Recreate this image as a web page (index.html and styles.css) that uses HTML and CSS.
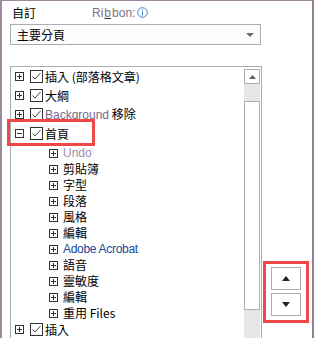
FILE: index.html
```html
<!DOCTYPE html>
<html>
<head>
<meta charset="utf-8">
<link rel="stylesheet" href="styles.css">
</head>
<body>
<div class="frame">
  <div class="head">
    <span class="label">自訂</span>
    <span class="ribbon">Ri<u>b</u>bon:<svg class="info" width="11" height="11" viewBox="0 0 11 11"><circle cx="5.5" cy="5.5" r="4.8" fill="none" stroke="#3c7fd4" stroke-width="1"/><rect x="5" y="2.5" width="1" height="1" fill="#3c7fd4"/><rect x="5" y="4.5" width="1" height="4" fill="#3c7fd4"/></svg></span>
  </div>
  <div class="select">
    <span>主要分頁</span>
    <svg class="caret" width="8" height="5" viewBox="0 0 8 5"><path d="M0 0H8L4 4Z" fill="#6d6d6d"/></svg>
  </div>
  <div class="main">
    <div class="listbox">
      <div class="tree">
        <div class="row top">
          <svg class="exp" width="9" height="9" viewBox="0 0 9 9"><rect x="0.5" y="0.5" width="8" height="8" fill="#fff" stroke="#333"/><path d="M2 4.5H7M4.5 2V7" stroke="#333"/></svg>
          <svg class="chk" width="13" height="13" viewBox="0 0 13 13"><rect x="0.5" y="0.5" width="12" height="12" fill="#fff" stroke="#333"/><path d="M2.5 6.5L5 9L10.5 3" fill="none" stroke="#444" stroke-width="1"/></svg>
          <span class="txt">插入 (部落格文章)</span>
        </div>
        <div class="row top">
          <svg class="exp" width="9" height="9" viewBox="0 0 9 9"><rect x="0.5" y="0.5" width="8" height="8" fill="#fff" stroke="#333"/><path d="M2 4.5H7M4.5 2V7" stroke="#333"/></svg>
          <svg class="chk" width="13" height="13" viewBox="0 0 13 13"><rect x="0.5" y="0.5" width="12" height="12" fill="#fff" stroke="#333"/><path d="M2.5 6.5L5 9L10.5 3" fill="none" stroke="#444" stroke-width="1"/></svg>
          <span class="txt">大綱</span>
        </div>
        <div class="row top">
          <svg class="exp" width="9" height="9" viewBox="0 0 9 9"><rect x="0.5" y="0.5" width="8" height="8" fill="#fff" stroke="#333"/><path d="M2 4.5H7M4.5 2V7" stroke="#333"/></svg>
          <svg class="chk" width="13" height="13" viewBox="0 0 13 13"><rect x="0.5" y="0.5" width="12" height="12" fill="#fff" stroke="#333"/><path d="M2.5 6.5L5 9L10.5 3" fill="none" stroke="#444" stroke-width="1"/></svg>
          <span class="txt"><span class="muted">Background</span> 移除</span>
        </div>
        <div class="row top selected">
          <svg class="exp" width="9" height="9" viewBox="0 0 9 9"><rect x="0.5" y="0.5" width="8" height="8" fill="#fff" stroke="#333"/><path d="M2 4.5H7" stroke="#333"/></svg>
          <svg class="chk" width="13" height="13" viewBox="0 0 13 13"><rect x="0.5" y="0.5" width="12" height="12" fill="#fff" stroke="#333"/><path d="M2.5 6.5L5 9L10.5 3" fill="none" stroke="#444" stroke-width="1"/></svg>
          <span class="txt">首頁</span>
          <span class="redbox"></span>
        </div>
        <div class="sub first">
          <svg class="exp" width="9" height="9" viewBox="0 0 9 9"><rect x="0.5" y="0.5" width="8" height="8" fill="#fff" stroke="#333"/><path d="M2 4.5H7M4.5 2V7" stroke="#333"/></svg>
          <span class="txt muted2">Undo</span>
        </div>
        <div class="sub">
          <svg class="exp" width="9" height="9" viewBox="0 0 9 9"><rect x="0.5" y="0.5" width="8" height="8" fill="#fff" stroke="#333"/><path d="M2 4.5H7M4.5 2V7" stroke="#333"/></svg>
          <span class="txt">剪貼簿</span>
        </div>
        <div class="sub">
          <svg class="exp" width="9" height="9" viewBox="0 0 9 9"><rect x="0.5" y="0.5" width="8" height="8" fill="#fff" stroke="#333"/><path d="M2 4.5H7M4.5 2V7" stroke="#333"/></svg>
          <span class="txt">字型</span>
        </div>
        <div class="sub">
          <svg class="exp" width="9" height="9" viewBox="0 0 9 9"><rect x="0.5" y="0.5" width="8" height="8" fill="#fff" stroke="#333"/><path d="M2 4.5H7M4.5 2V7" stroke="#333"/></svg>
          <span class="txt">段落</span>
        </div>
        <div class="sub">
          <svg class="exp" width="9" height="9" viewBox="0 0 9 9"><rect x="0.5" y="0.5" width="8" height="8" fill="#fff" stroke="#333"/><path d="M2 4.5H7M4.5 2V7" stroke="#333"/></svg>
          <span class="txt">風格</span>
        </div>
        <div class="sub">
          <svg class="exp" width="9" height="9" viewBox="0 0 9 9"><rect x="0.5" y="0.5" width="8" height="8" fill="#fff" stroke="#333"/><path d="M2 4.5H7M4.5 2V7" stroke="#333"/></svg>
          <span class="txt">編輯</span>
        </div>
        <div class="sub">
          <svg class="exp" width="9" height="9" viewBox="0 0 9 9"><rect x="0.5" y="0.5" width="8" height="8" fill="#fff" stroke="#333"/><path d="M2 4.5H7M4.5 2V7" stroke="#333"/></svg>
          <span class="txt adobe">Adobe Acrobat</span>
        </div>
        <div class="sub">
          <svg class="exp" width="9" height="9" viewBox="0 0 9 9"><rect x="0.5" y="0.5" width="8" height="8" fill="#fff" stroke="#333"/><path d="M2 4.5H7M4.5 2V7" stroke="#333"/></svg>
          <span class="txt">語音</span>
        </div>
        <div class="sub">
          <svg class="exp" width="9" height="9" viewBox="0 0 9 9"><rect x="0.5" y="0.5" width="8" height="8" fill="#fff" stroke="#333"/><path d="M2 4.5H7M4.5 2V7" stroke="#333"/></svg>
          <span class="txt">靈敏度</span>
        </div>
        <div class="sub">
          <svg class="exp" width="9" height="9" viewBox="0 0 9 9"><rect x="0.5" y="0.5" width="8" height="8" fill="#fff" stroke="#333"/><path d="M2 4.5H7M4.5 2V7" stroke="#333"/></svg>
          <span class="txt">編輯</span>
        </div>
        <div class="sub">
          <svg class="exp" width="9" height="9" viewBox="0 0 9 9"><rect x="0.5" y="0.5" width="8" height="8" fill="#fff" stroke="#333"/><path d="M2 4.5H7M4.5 2V7" stroke="#333"/></svg>
          <span class="txt">重用 Files</span>
        </div>
        <div class="row last">
          <svg class="exp" width="9" height="9" viewBox="0 0 9 9"><rect x="0.5" y="0.5" width="8" height="8" fill="#fff" stroke="#333"/><path d="M2 4.5H7M4.5 2V7" stroke="#333"/></svg>
          <svg class="chk" width="13" height="13" viewBox="0 0 13 13"><rect x="0.5" y="0.5" width="12" height="12" fill="#fff" stroke="#333"/><path d="M2.5 6.5L5 9L10.5 3" fill="none" stroke="#444" stroke-width="1"/></svg>
          <span class="txt">插入</span>
        </div>
      </div>
      <div class="scrollbar">
        <div class="sbtn"><svg width="7" height="4" viewBox="0 0 7 4"><path d="M0 4H7L3.5 0Z" fill="#606060"/></svg></div>
        <div class="thumb"></div>
      </div>
    </div>
    <div class="side">
      <div class="movebox">
        <div class="mbtn"><svg width="8" height="5" viewBox="0 0 8 5"><path d="M0 5H8L4 0Z" fill="#222"/></svg></div>
        <div class="mbtn"><svg width="8" height="5" viewBox="0 0 8 5"><path d="M0 0H8L4 5Z" fill="#222"/></svg></div>
      </div>
    </div>
  </div>
</div>
</body>
</html>
```
FILE: styles.css
```css
* { box-sizing: border-box; }
html, body { margin: 0; padding: 0; background: #fff; }
body {
  font-family: "Noto Sans CJK TC", "Liberation Sans", sans-serif;
  font-size: 12px;
  color: #000;
  width: 314px;
  height: 338px;
  overflow: hidden;
}
.frame {
  width: 314px;
  height: 338px;
  overflow: hidden;
  border-top: 1px solid #9e8a9c;
  border-left: 2px solid #9e8a9c;
  border-right: 2px solid #8d7f8d;
  padding: 3px 0 0 8px;
}
.head {
  display: flex;
  align-items: center;
  height: 17px;
  padding-left: 2px;
}
.label { width: 80px; line-height: 17px; }
.ribbon {
  display: flex;
  align-items: center;
  gap: 1px;
  color: #7e6f86;
  font-family: "Liberation Sans", sans-serif;
  font-size: 12px;
}
.ribbon u { text-decoration-color: #333; }
.info { margin-left: 1px; }
.select {
  margin-top: 3px;
  width: 251px;
  height: 21px;
  border: 1px solid #adadad;
  background: #fdfdfd;
  display: flex;
  align-items: center;
  justify-content: space-between;
  padding: 0 6px 0 6px;
  line-height: 19px;
}
.caret { margin-top: 1px; }
.main {
  margin-top: 21px;
  display: flex;
  align-items: flex-start;
}
.listbox {
  width: 252px;
  height: 272px;
  border: 1px solid #adadad;
  border-bottom: none;
  display: flex;
  align-items: flex-start;
  background: #fff;
}
.tree {
  flex: 1;
  padding-left: 4px;
}
.row {
  position: relative;
  display: flex;
  align-items: center;
  height: 19px;
}
.sub {
  display: flex;
  align-items: center;
  height: 16px;
  padding-left: 34px;
}
.sub.first { margin-top: 2px; }
.row.last { height: 17px; }
.exp { flex: none; }
.chk { flex: none; margin-left: 6px; }
.row .txt { margin-left: 2px; line-height: 19px; }
.sub .txt { margin-left: 5px; line-height: 16px; }
.muted {
  font-family: "Liberation Sans", sans-serif;
  color: #766a8a;
}
.muted2 {
  font-family: "Liberation Sans", sans-serif;
  color: #9c8db4;
}
.adobe {
  font-family: "Liberation Sans", sans-serif;
  color: #21489a;
  letter-spacing: -0.3px;
}
.redbox {
  position: absolute;
  left: -8px;
  top: -5px;
  width: 88px;
  height: 27px;
  border: 3px solid #f04848;
}
.scrollbar {
  flex: none;
  width: 16px;
  height: 270px;
  margin: 2px 1px 0 0;
  background: #e6e6e6;
  display: flex;
  flex-direction: column;
}
.sbtn {
  height: 15px;
  border: 1px solid #adadad;
  background: #fff;
  display: flex;
  align-items: center;
  justify-content: center;
}
.thumb {
  margin-top: 17px;
  height: 209px;
  border: 1px solid #adadad;
  background: #fff;
}
.side {
  flex: none;
  padding-top: 195px;
  padding-left: 1px;
}
.movebox {
  width: 46px;
  height: 62px;
  border: 3px solid #f04848;
  padding: 3px 5px 0 5px;
  display: flex;
  flex-direction: column;
  gap: 3px;
}
.mbtn {
  width: 30px;
  height: 23px;
  border: 1px solid #adadad;
  background: #fff;
  display: flex;
  align-items: center;
  justify-content: center;
}
```
